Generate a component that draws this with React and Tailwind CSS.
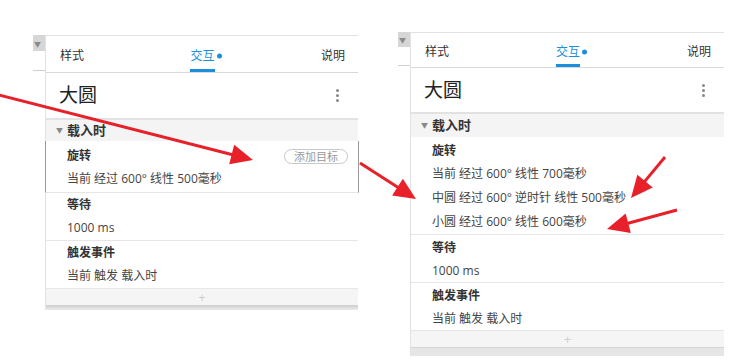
import React from "react";

const Arrow = ({ x1, y1, x2, y2 }) => {
  const dx = x2 - x1;
  const dy = y2 - y1;
  const len = Math.sqrt(dx * dx + dy * dy);
  const ux = dx / len;
  const uy = dy / len;
  const hl = 22;
  const hw = 10;
  const bx = x2 - ux * hl;
  const by = y2 - uy * hl;
  const pts = `${x2},${y2} ${bx - uy * hw},${by + ux * hw} ${bx + uy * hw},${by - ux * hw}`;
  return (
    <g>
      <line x1={x1} y1={y1} x2={bx + ux * 4} y2={by + uy * 4} stroke="#e8202a" strokeWidth="3" />
      <polygon points={pts} fill="#e8202a" />
    </g>
  );
};

const Strip = ({ cls }) => (
  <div className="w-[12px] shrink-0 flex flex-col">
    <div className={`bg-[#d6d6d6] flex items-end pl-[1px] pb-[3px] ${cls.stripH}`}>
      <span className="text-[7px] leading-none text-[#8a8a8a]">▼</span>
    </div>
    <div className={`border-b border-[#d0d0d0] ${cls.stripGap}`}></div>
  </div>
);

const Item = ({ title, lines, pt, rowH, selected, button }) => (
  <div
    className={`border-b border-[#e6e6e6] pl-[21px] pr-[10px] ${pt} ${
      selected ? "border-x border-x-[#9a9a9a] -mx-px" : ""
    }`}
  >
    <div className="h-[22px] flex items-center justify-between">
      <span className="font-bold text-[#333]">{title}</span>
      {button && (
        <span className="h-[15px] px-[9px] flex items-center rounded-full border border-[#c8c8c8] text-[11px] text-[#999] leading-none">
          添加目标
        </span>
      )}
    </div>
    {lines.map((l, i) => (
      <div key={i} className={`flex items-center text-[#444] ${rowH}`}>
        {l}
      </div>
    ))}
  </div>
);

const Panel = ({ cls, rotate }) => (
  <div className={`flex items-start ${cls.wrap}`}>
    <Strip cls={cls} />
    <div className={`flex flex-col border-l border-t border-[#e2e2e2] ${cls.w}`}>
      <div className={`flex items-center justify-between border-b border-[#d9d9d9] pl-[14px] pr-[13px] pt-[4px] relative ${cls.tabs}`}>
        <span className="text-[#333]">样式</span>
        <span className="relative text-[#1a8fdc] self-stretch flex items-center">
          交互
          <span className="absolute -right-[7px] top-1/2 -translate-y-1/2 w-[5px] h-[5px] rounded-full bg-[#1a8fdc]"></span>
          <span className="absolute left-0 right-0 bottom-0 h-[3px] bg-[#1a8fdc]"></span>
        </span>
        <span className="text-[#333]">说明</span>
      </div>
      <div className={`flex items-center justify-between pl-[13px] pr-[19px] ${cls.title}`}>
        <span className="text-[19px] text-[#222]">大圆</span>
        <span className="flex flex-col gap-[2px]">
          <span className="w-[3px] h-[3px] rounded-full bg-[#888]"></span>
          <span className="w-[3px] h-[3px] rounded-full bg-[#888]"></span>
          <span className="w-[3px] h-[3px] rounded-full bg-[#888]"></span>
        </span>
      </div>
      <div className={`border-t-2 border-[#e2e2e2] bg-[#f4f4f4] flex items-center pl-[10px] ${cls.header}`}>
        <span className="text-[7px] text-[#888] mr-[4px]">▼</span>
        <span className="font-bold text-[13px] text-[#333]">载入时</span>
      </div>
      <Item
        title="旋转"
        lines={rotate}
        pt={cls.pt1}
        rowH={cls.rowH}
        selected={cls.selected}
        button={cls.selected}
      />
      <Item title="等待" lines={["1000 ms"]} pt={cls.pt2} rowH={cls.rowH2} />
      <Item title="触发事件" lines={["当前 触发 载入时"]} pt={cls.pt2} rowH={cls.rowH2} />
      <div className="h-[16px] bg-[#f5f5f5] flex items-center justify-center text-[13px] leading-none text-[#cfcfcf]">
        +
      </div>
      <div className={cls.bottom}></div>
    </div>
  </div>
);

const leftCls = {
  wrap: "ml-[33px] mt-[35px]",
  stripH: "h-[16px]",
  stripGap: "h-[20px]",
  w: "w-[313px]",
  tabs: "h-[37px]",
  title: "h-[45px]",
  header: "h-[23px]",
  pt1: "pt-[4px] pb-[2px]",
  pt2: "pt-[1px] pb-[1px]",
  rowH: "h-[23px]",
  rowH2: "h-[23px]",
  selected: true,
  bottom: "h-[5px] bg-gradient-to-b from-[#cdcdcd] to-[#ececec]",
};

const rightCls = {
  wrap: "ml-[40px] mt-[32px]",
  stripH: "h-[15px]",
  stripGap: "h-[19px]",
  w: "w-[314px]",
  tabs: "h-[35px]",
  title: "h-[44px]",
  header: "h-[25px]",
  pt1: "pt-[3px]",
  pt2: "pt-[2px]",
  rowH: "h-[24px]",
  rowH2: "h-[23px]",
  selected: false,
  bottom: "h-[9px] bg-[#e6e6e6] border-t border-[#d4d4d4]",
};

export default function App() {
  return (
    <div className="relative w-[755px] h-[362px] bg-white overflow-hidden text-[12px] leading-none font-['Open_Sans','Noto_Sans_CJK_SC',sans-serif]">
      <div className="flex items-start">
        <Panel cls={leftCls} rotate={["当前 经过 600° 线性 500毫秒"]} />
        <Panel
          cls={rightCls}
          rotate={[
            "当前 经过 600° 线性 700毫秒",
            "中圆 经过 600° 逆时针 线性 500毫秒",
            "小圆 经过 600° 线性 600毫秒",
          ]}
        />
      </div>
      <svg className="absolute inset-0 pointer-events-none" width="755" height="362">
        <Arrow x1={-5} y1={94} x2={253} y2={160} />
        <Arrow x1={360} y1={163} x2={416} y2={199} />
        <Arrow x1={665} y1={157} x2={631} y2={198} />
        <Arrow x1={677} y1={210} x2={607} y2={229} />
      </svg>
    </div>
  );
}
